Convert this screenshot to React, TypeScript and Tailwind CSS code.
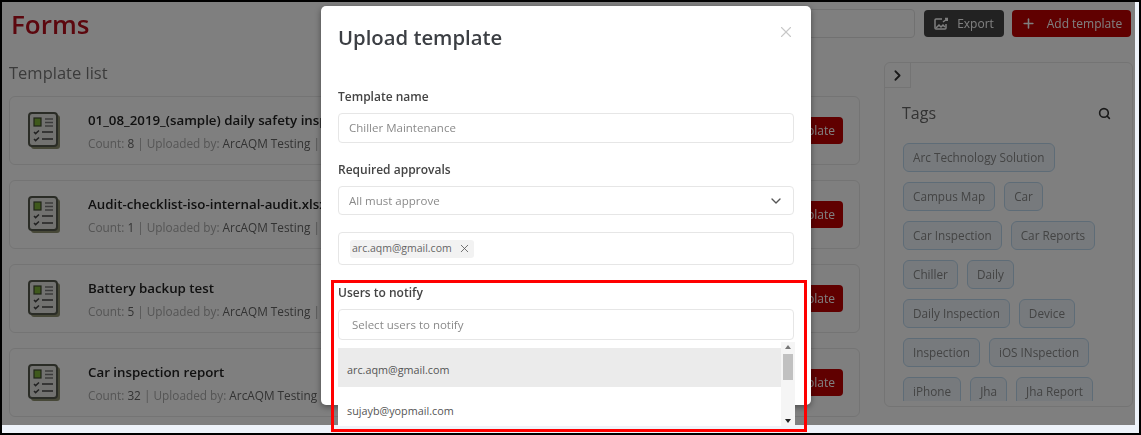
import React from 'react';
import { ChevronDown, ChevronRight, Plus, Search, X } from 'lucide-react';

const templates = [
  { name: '01_08_2019_(sample) daily safety inspection', count: 8 },
  { name: 'Audit-checklist-iso-internal-audit.xlsx', count: 1 },
  { name: 'Battery backup test', count: 5 },
  { name: 'Car inspection report', count: 32 },
];

const tagRows = [
  ['Arc Technology Solution'],
  ['Campus Map', 'Car'],
  ['Car Inspection', 'Car Reports'],
  ['Chiller', 'Daily'],
  ['Daily Inspection', 'Device'],
  ['Inspection', 'iOS INspection'],
  ['iPhone', 'Jha', 'Jha Report'],
];

const ChecklistIcon = () => (
  <svg width="33" height="38" viewBox="0 0 33 38" fill="none" className="shrink-0">
    <rect x="3" y="3" width="29" height="34" rx="3" fill="#8f9070" />
    <rect x="1" y="1" width="28" height="33" rx="3" fill="#e4e4e0" stroke="#55584c" strokeWidth="2" />
    <rect x="6" y="6" width="7" height="8" fill="#7fb238" stroke="#3f4a30" strokeWidth="1.2" />
    <path d="M17 7h8M17 10.5h8M17 14h8" stroke="#777" strokeWidth="1.5" />
    <path d="M6 20l1.6 1.6L11 18.500M6 27l1.6 1.6L11 25.500" stroke="#444" strokeWidth="1.5" />
    <path d="M14 20h11M14 27h11" stroke="#444" strokeWidth="1.5" />
  </svg>
);

const TemplateCard = ({ name, count }: { name: string; count: number }) => (
  <div className="flex h-[69px] items-center rounded-md border border-[#e8e8e8] bg-white pl-[18px] pr-[16px]">
    <ChecklistIcon />
    <div className="ml-[27px] min-w-0 flex-1">
      <p className="truncate text-[13.300px] font-semibold leading-[18px] text-[#222]">{name}</p>
      <p className="mt-[6px] text-[11.800px] leading-[16px] text-[#aaa]">
        Count: <span className="text-[#666]">{count}</span> | Uploaded by: <span className="text-[#666]">ArcAQM Testing</span> | Uploaded on: 01/08/2019
      </p>
    </div>
    <button className="h-[27px] w-[110px] rounded bg-[#c00000] pr-[8px] text-right text-[12px] text-white">Use template</button>
  </div>
);

const Field = ({ children, className }: { children: React.ReactNode; className: string }) => (
  <div className={`flex items-center rounded-[4px] border border-[#e6e6e6] bg-white text-[11.500px] text-[#8a8a8a] ${className}`}>
    {children}
  </div>
);

const Label = ({ children, className }: { children: React.ReactNode; className: string }) => (
  <p className={`text-[12px] font-semibold leading-[18px] text-[#444] ${className}`}>{children}</p>
);

export default function App() {
  return (
    <div className="relative h-[435px] w-[1141px] overflow-hidden bg-black p-[2px] font-['Open_Sans',sans-serif]">
      <div className="h-[431px] bg-[#eef3fa] pb-[8px] pr-[4px] blur-[0.7px]">
        <div className="relative h-[423px] overflow-hidden bg-white pl-[7px] pr-[4px]">
          <header className="flex h-[36px] items-center pt-[7px]">
            <h1 className="ml-[2px] text-[26px] font-semibold leading-[30px] text-[#b80f1c]">Forms</h1>
            <div className="ml-auto h-[29px] w-[200px] rounded border border-[#e2e2e2]" />
            <button className="ml-[9px] flex h-[27px] w-[80px] items-center justify-center gap-[9px] rounded bg-[#444] text-[12px] text-white">
              <svg width="14" height="14" viewBox="0 0 14 14" fill="none" stroke="#fff" strokeWidth="1.500">
                <path d="M8 2H2a1 1 0 0 0-1 1v8a1 1 0 0 0 1 1h9a1 1 0 0 0 1-1V7" />
                <path d="M2 11l3-3 2 2 2-2 2 2" />
                <path d="M9 5l4-3M11 1.500h2.500V4" />
              </svg>
              Export
            </button>
            <button className="ml-[8px] flex h-[27px] w-[119px] items-center justify-center gap-[11px] rounded bg-[#c00000] text-[12px] text-white">
              <Plus size={15} strokeWidth={2.500} />
              Add template
            </button>
          </header>
          <div className="flex gap-[24px] pt-[24px]">
            <section className="w-[851px] shrink-0">
              <h2 className="text-[16.500px] leading-[22px] text-[#777]">Template list</h2>
              <div className="mt-[12px] flex flex-col gap-[15px]">
                {templates.map((t) => (
                  <TemplateCard key={t.name} name={t.name} count={t.count} />
                ))}
              </div>
            </section>
            <aside className="h-[345px] w-[249px] shrink-0 overflow-hidden rounded-md border border-[#e8e8e8] bg-white">
              <div className="flex h-[25px] w-[26px] items-center justify-center border-b border-r border-[#e8e8e8] text-[#333]">
                <ChevronRight size={17} strokeWidth={2.500} />
              </div>
              <div className="flex items-center justify-between pl-[17px] pr-[21px] pt-[14px]">
                <h3 className="text-[16px] leading-[22px] text-[#666]">Tags</h3>
                <Search size={13} strokeWidth={3} className="text-[#333]" />
              </div>
              <div className="ml-[18px] mt-[19px] flex h-[258px] flex-col gap-[10px] overflow-hidden">
                {tagRows.map((row) => (
                  <div key={row[0]} className="flex shrink-0 gap-[9px]">
                    {row.map((tag) => (
                      <span key={tag} className="flex h-[29px] items-center rounded-md border border-[#bcd8ee] bg-[#eef5fb] px-[9px] text-[11.750px] text-[#888]">
                        {tag}
                      </span>
                    ))}
                  </div>
                ))}
              </div>
            </aside>
          </div>
          <div className="absolute inset-0 bg-black/50" />
        </div>
      </div>

      <div className="absolute left-[321px] top-[6px] h-[399px] w-[490px] rounded-[5px] bg-white px-[17px] pt-[16px] shadow-[0_2px_6px_rgba(0,0,0,0.4)] blur-[0.6px]">
        <div className="flex items-center justify-between">
          <h2 className="text-[20.300px] font-semibold leading-[30px] text-[#3c3f44]">Upload template</h2>
          <X size={18} strokeWidth={1.500} className="-mr-[1px] mb-[11px] text-[#c8c8c8]" />
        </div>
        <Label className="mt-[36px]">Template name</Label>
        <Field className="mt-[7px] h-[30px] px-[10px]">Chiller Maintenance</Field>
        <Label className="mt-[18px]">Required approvals</Label>
        <Field className="mt-[7px] h-[29px] justify-between pl-[10px] pr-[9px]">
          All must approve
          <ChevronDown size={16} className="text-[#555]" />
        </Field>
        <Field className="mt-[17px] h-[33px] px-[11px]">
          <span className="flex h-[18px] w-[124px] items-center justify-between rounded-[3px] bg-[#f2f2f2] pl-[2px] pr-[3px] text-[10.500px] text-[#666]">
            arc.aqm@gmail.com
            <X size={13} strokeWidth={1.500} className="text-[#555]" />
          </span>
        </Field>
        <Label className="mt-[19px]">Users to notify</Label>
        <Field className="mt-[7px] h-[31px] px-[13px]">Select users to notify</Field>
        <div className="absolute left-[17px] top-[336px] flex h-[84px] w-[457px] bg-white text-[10.800px] text-[#555]">
          <ul className="min-w-0 flex-1 pt-[6px]">
            <li className="flex h-[39px] items-center bg-[#ebebeb] pl-[9px] pt-[5px]">arc.aqm@gmail.com</li>
            <li className="flex h-[39px] items-center pl-[9px] pt-[9px]">sujayb@yopmail.com</li>
          </ul>
          <div className="flex w-[14px] flex-col items-center justify-between bg-[#f5f5f5] py-[3px]">
            <span className="h-0 w-0 border-x-[3px] border-b-[4px] border-x-transparent border-b-[#777]" />
            <span className="mb-auto mt-[5px] h-[26px] w-[10px] bg-[#c1c1c1]" />
            <span className="h-0 w-0 border-x-[3px] border-t-[4px] border-x-transparent border-t-[#222]" />
          </div>
        </div>
      </div>

      <div className="absolute left-[331px] top-[280px] h-[152px] w-[476px] border-[3px] border-[#f00]" />
    </div>
  );
}
